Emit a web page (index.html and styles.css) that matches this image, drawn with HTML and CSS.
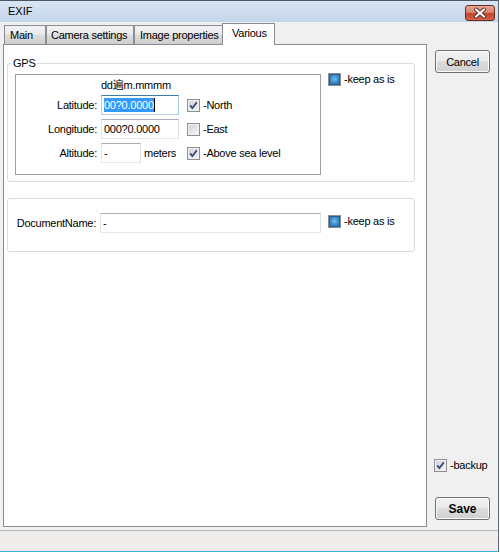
FILE: index.html
```html
<!DOCTYPE html>
<html>
<head>
<meta charset="utf-8">
<link rel="stylesheet" href="styles.css">
</head>
<body>
<div class="window">
  <div class="titlebar">
    <span class="title">EXIF</span>
    <div class="close">
      <svg width="28" height="14" viewBox="0 0 28 14">
        <path d="M10 3.5 L18 10.5 M18 3.5 L10 10.5" stroke="#5a2a22" stroke-width="4" stroke-linecap="round" fill="none"/>
        <path d="M10 3.5 L18 10.5 M18 3.5 L10 10.5" stroke="#ffffff" stroke-width="2.2" stroke-linecap="round" fill="none"/>
      </svg>
    </div>
  </div>
  <div class="client">
    <div class="tabwidget">
      <div class="tabbar">
        <div class="tab t-main">Main</div>
        <div class="tab t-camera">Camera settings</div>
        <div class="tab t-image">Image properties</div>
        <div class="tab t-various active">Various</div>
      </div>
      <div class="panel">
        <fieldset class="group gps">
          <legend>GPS</legend>
          <div class="gps-row">
            <div class="frame">
              <div class="grid">
                <span></span>
                <span class="hdr">dd遍m.mmmm</span>
                <span></span>

                <span class="lbl">Latitude:</span>
                <div class="field focus"><span class="sel">00?0.0000</span><span class="caret"></span></div>
                <div class="opt"><span class="cb checked"><svg viewBox="0 0 11 11"><path d="M2.2 5.4 L4.4 8 L8.8 2.4"/></svg></span><span class="cbtext">-North</span></div>

                <span class="lbl">Longitude:</span>
                <div class="field">000?0.0000</div>
                <div class="opt"><span class="cb"></span><span class="cbtext">-East</span></div>

                <span class="lbl">Altitude:</span>
                <div class="alt"><div class="field short">-</div><span class="unit">meters</span></div>
                <div class="opt"><span class="cb checked"><svg viewBox="0 0 11 11"><path d="M2.2 5.4 L4.4 8 L8.8 2.4"/></svg></span><span class="cbtext">-Above sea level</span></div>
              </div>
            </div>
            <div class="opt keep"><span class="cb indet"></span><span class="cbtext">-keep as is</span></div>
          </div>
        </fieldset>
        <fieldset class="group doc">
          <div class="doc-row">
            <span class="lbl doclbl">DocumentName:</span>
            <div class="field wide">-</div>
            <div class="opt keep2"><span class="cb indet"></span><span class="cbtext">-keep as is</span></div>
          </div>
        </fieldset>
      </div>
    </div>
    <div class="side">
      <button class="btn">Cancel</button>
      <div class="opt backup"><span class="cb checked"><svg viewBox="0 0 11 11"><path d="M2.2 5.4 L4.4 8 L8.8 2.4"/></svg></span><span class="cbtext">-backup</span></div>
      <button class="btn bold">Save</button>
    </div>
  </div>
  <div class="status"></div>
</div>
</body>
</html>
```
FILE: styles.css
```css
* { box-sizing: border-box; }
html, body { margin: 0; padding: 0; }
body {
  width: 500px;
  height: 554px;
  overflow: hidden;
  background: #ffffff;
  font-family: "Liberation Sans", "Noto Sans CJK SC", Arial, sans-serif;
  font-size: 11px;
  letter-spacing: -0.25px;
  color: #000;
}
.window {
  width: 499px;
  height: 552px;
  border-top: 1px solid #4a5566;
  border-right: 1px solid #5d6b7c;
  background: #f0f0f0;
  display: flex;
  flex-direction: column;
}
.titlebar {
  flex: none;
  height: 21px;
  background: linear-gradient(#d9e5f3, #c3d5eb);
  display: flex;
  justify-content: space-between;
  align-items: flex-start;
  padding: 0 3px 0 8px;
}
.title { line-height: 20px; font-size: 11px; letter-spacing: 0; }
.close {
  margin-top: 4px;
  width: 30px;
  height: 16px;
  border: 1px solid #6d2d22;
  border-radius: 3px;
  background: linear-gradient(#e8a797 0%, #d8826c 45%, #c2432a 55%, #d0624a 100%);
  display: flex;
  align-items: center;
  justify-content: center;
}
.close svg { display: block; }
.client {
  flex: none;
  height: 505px;
  display: flex;
}
.tabwidget {
  margin-left: 3px;
  width: 424px;
  display: flex;
  flex-direction: column;
}
.tabbar {
  height: 22px;
  flex: none;
  display: flex;
  align-items: flex-end;
  padding-left: 1px;
}
.tab {
  height: 19px;
  border: 1px solid #898c95;
  border-bottom: none;
  background: linear-gradient(#f2f2f2 0%, #ebebeb 45%, #dddddd 50%, #cfcfcf 100%);
  line-height: 18px;
  padding-left: 5px;
  white-space: nowrap;
}
.t-main { width: 42px; }
.t-camera { width: 88px; padding-left: 4px; }
.t-image { width: 89px; }
.tab.active {
  width: 53px;
  height: 22px;
  margin-left: -1px;
  margin-bottom: -1px;
  background: #ffffff;
  padding-left: 9px;
  line-height: 19px;
  position: relative;
  z-index: 1;
}
.panel {
  height: 483px;
  border: 1px solid #898c95;
  background: #ffffff;
  padding: 12px 11px 0 3px;
}
.group {
  margin: 0;
  width: 408px;
  border: 1px solid #d8dde2;
  border-radius: 3px;
  min-width: 0;
}
.gps { padding: 0 0 6px 3px; }
.gps legend {
  padding: 0 2px;
  line-height: 13px;
}
.gps-row {
  display: flex;
  align-items: flex-start;
  margin-top: 3px;
}
.frame {
  margin: 1px 0 0 4px;
  width: 306px;
  height: 101px;
  border: 1px solid #a0a0a0;
  padding-top: 5px;
}
.grid {
  display: grid;
  grid-template-columns: 81px 78px auto;
  grid-template-rows: 11px 20px 20px 20px;
  column-gap: 4px;
  row-gap: 4px;
}
.hdr { line-height: 11px; white-space: nowrap; }
.lbl {
  display: flex;
  justify-content: flex-end;
  align-items: center;
  white-space: nowrap;
}
.field {
  height: 20px;
  border: 1px solid;
  border-color: #abadb3 #dbdfe6 #e3e9ef #e2e3ea;
  background: #fff;
  padding-left: 2px;
  line-height: 18px;
  white-space: nowrap;
  display: flex;
  align-items: center;
}
.field.focus { border-color: #3d7bad #a4c9e3 #b5cfe7 #b5cfe7; }
.sel { background: #3399ff; color: #fff; line-height: 14px; }
.caret { width: 1px; height: 14px; background: #000; }
.field.short { width: 40px; }
.alt { display: flex; align-items: center; gap: 3px; }
.unit { line-height: 14px; }
.opt {
  display: flex;
  align-items: center;
  gap: 3px;
  padding-left: 4px;
  white-space: nowrap;
}
.cb {
  flex: none;
  width: 13px;
  height: 13px;
  border: 1px solid #8e8f8f;
  background: linear-gradient(135deg, #cdd0d5 0%, #f8f8f8 100%);
  box-shadow: inset 0 0 0 1px #f1f1f1;
  display: flex;
  align-items: center;
  justify-content: center;
}
.cb svg { width: 11px; height: 11px; display: block; }
.cb svg path { fill: none; stroke: #3a4a7e; stroke-width: 1.8; }
.cb.indet::after {
  content: "";
  width: 9px;
  height: 9px;
  border: 1px solid #2a5d8e;
  background: radial-gradient(circle at 50% 45%, #6fc0ef 0%, #3c8fcf 55%, #2670b3 100%);
}
.cbtext { line-height: 13px; }
.keep { padding-left: 7px; }
.doc {
  margin-top: 16px;
  padding: 14px 0 18px 11px;
}
.doc-row { display: flex; align-items: center; }
.doclbl { width: 77px; margin-right: 4px; height: 20px; }
.field.wide { width: 221px; }
.keep2 { padding-left: 7px; align-self: flex-start; margin-top: 2px; }
.side {
  flex: 1;
  display: flex;
  flex-direction: column;
  align-items: flex-start;
  padding: 28px 0 7px 8px;
}
.btn {
  width: 55px;
  height: 23px;
  margin: 0;
  padding: 0;
  border: 1px solid #707070;
  border-radius: 3px;
  background: linear-gradient(#f2f2f2 0%, #ebebeb 45%, #dddddd 50%, #cfcfcf 100%);
  box-shadow: inset 0 0 0 1px #fbfbfb;
  font-family: inherit;
  font-size: 11px;
  letter-spacing: -0.25px;
  color: #000;
}
.btn.bold { font-weight: bold; font-size: 12px; letter-spacing: 0; }
.backup {
  margin-top: auto;
  margin-bottom: 25px;
  padding-left: 0;
  margin-left: -1px;
}
.status {
  flex: none;
  margin-top: 3px;
  height: 22px;
  border-top: 1px solid #b9b9b9;
  border-bottom: 1px solid #3aaed8;
  background: #efedeb;
}
```
